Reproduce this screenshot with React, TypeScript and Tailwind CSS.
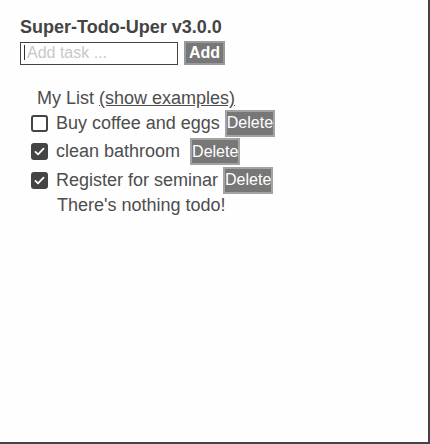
import { useState } from "react";

type Todo = { id: number; text: string; done: boolean };

const initialTodos: Todo[] = [
  { id: 1, text: "Buy coffee and eggs", done: false },
  { id: 2, text: "clean bathroom ", done: true },
  { id: 3, text: "Register for seminar", done: true },
];

function CheckBox({ checked, onToggle }: { checked: boolean; onToggle: () => void }) {
  return (
    <button
      onClick={onToggle}
      className={`flex h-[17px] w-[17px] shrink-0 items-center justify-center rounded-[3px] border-2 border-[#444] ${
        checked ? "bg-[#444]" : "bg-white"
      }`}
    >
      {checked && (
        <svg viewBox="0 0 16 16" className="h-[13px] w-[13px]" fill="none">
          <path d="M3 8.5l3.2 3L13 4.5" stroke="#fff" strokeWidth="2.2" strokeLinecap="round" strokeLinejoin="round" />
        </svg>
      )}
    </button>
  );
}

export default function App() {
  const [todos, setTodos] = useState<Todo[]>(initialTodos);
  const [task, setTask] = useState("");

  const toggle = (id: number) =>
    setTodos((list) => list.map((t) => (t.id === id ? { ...t, done: !t.done } : t)));
  const remove = (id: number) => setTodos((list) => list.filter((t) => t.id !== id));

  return (
    <div className="h-[444px] w-[430px] border-r-2 border-b-2 border-[#444] bg-[#fefefe] font-['Liberation_Sans',Arial,sans-serif] text-[#4d4d4d]">
      <div className="pl-[20px] pt-[17px]">
        {/* Header */}
        <h1 className="text-[18px] font-bold leading-[21px] text-[#444]">Super-Todo-Uper v3.0.0</h1>
        <div className="mt-[3px] flex items-start gap-[6px]">
          <div className="relative">
            <input
              value={task}
              onChange={(e) => setTask(e.target.value)}
              placeholder="Add task ..."
              className="h-[23px] w-[158px] border border-[#444] bg-white pl-[6px] text-[16px] text-[#444] outline-none placeholder:text-[#c8c8c8]"
            />
            {task === "" && <span className="absolute left-[4px] top-[4px] h-[15px] w-[1px] bg-[#333]" />}
          </div>
          <button className="h-[24px] w-[41px] border-2 border-[#9a9a9a] bg-[#777] text-[16px] font-bold leading-none text-white">
            Add
          </button>
        </div>
      </div>

      {/* List */}
      <div className="pt-[23px]">
        <div className="pl-[37px] text-[18px] leading-[21px]">
          My List <a className="cursor-pointer underline">(show examples)</a>
        </div>
        <div className="pl-[31px]">
          {todos.map((t) => (
            <div key={t.id} className="flex h-[28.5px] items-center">
              <CheckBox checked={t.done} onToggle={() => toggle(t.id)} />
              <span className="ml-[8px] whitespace-pre text-[18px] leading-[21px]">{t.text}</span>
              <button
                onClick={() => remove(t.id)}
                className="ml-[5px] h-[27px] border-2 border-[#a3a3a3] bg-[#777] px-0 text-[16px] leading-none text-white"
              >
                Delete
              </button>
            </div>
          ))}
        </div>
        <div className="pl-[57px] text-[18px] leading-[21px]">There's nothing todo!</div>
      </div>
    </div>
  );
}
